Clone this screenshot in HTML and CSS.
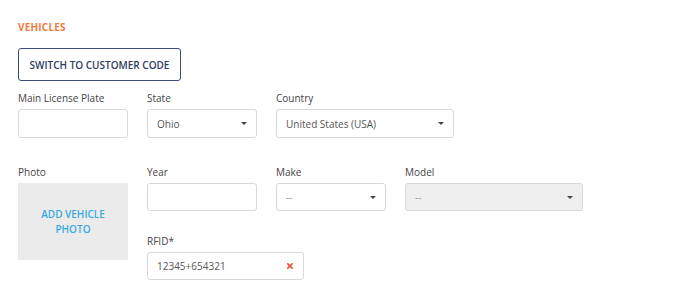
FILE: index.html
```html
<!DOCTYPE html>
<html>
<head>
<meta charset="utf-8">
<link rel="stylesheet" href="styles.css">
</head>
<body>
<div class="page">
  <h2 class="section-title">VEHICLES</h2>
  <button class="btn-outline">SWITCH TO CUSTOMER CODE</button>

  <div class="row row-1">
    <div class="field w-sm">
      <label class="label">Main License Plate</label>
      <div class="input"></div>
    </div>
    <div class="field w-sm">
      <label class="label">State</label>
      <div class="input select"><span class="value">Ohio</span><span class="caret"></span></div>
    </div>
    <div class="field w-lg">
      <label class="label">Country</label>
      <div class="input select"><span class="value">United States (USA)</span><span class="caret"></span></div>
    </div>
  </div>

  <div class="row row-2">
    <div class="field w-sm">
      <label class="label">Photo</label>
      <div class="photo"><span>ADD VEHICLE<br>PHOTO</span></div>
    </div>
    <div class="right">
      <div class="row">
        <div class="field w-sm">
          <label class="label">Year</label>
          <div class="input"></div>
        </div>
        <div class="field w-sm">
          <label class="label">Make</label>
          <div class="input select"><span class="value muted">--</span><span class="caret"></span></div>
        </div>
        <div class="field w-lg">
          <label class="label">Model</label>
          <div class="input select disabled"><span class="value muted">--</span><span class="caret"></span></div>
        </div>
      </div>
      <div class="field w-md rfid">
        <label class="label">RFID*</label>
        <div class="input select"><span class="value">12345+654321</span><svg class="clear" width="6" height="6" viewBox="0 0 6 6"><path d="M0.8 0.8 L5.2 5.2 M5.2 0.8 L0.8 5.2" stroke="#ee4b2b" stroke-width="1.6" stroke-linecap="square"/></svg></div>
      </div>
    </div>
  </div>
</div>
</body>
</html>
```

FILE: styles.css
```css
* { box-sizing: border-box; }
html, body { margin: 0; padding: 0; background: #fff; }
body { font-family: "Open Sans", "DejaVu Sans", sans-serif; color: #444; }
.page { padding: 20px 18px 0 18px; }
.section-title {
  margin: 0;
  font-size: 10px;
  line-height: 14px;
  font-weight: 700;
  color: #f5793b;
  letter-spacing: 0.2px;
}
.btn-outline {
  display: block;
  margin-top: 14px;
  width: 163px;
  height: 33px;
  border: 1px solid #3a4a7c;
  border-radius: 3px;
  background: #fff;
  color: #2f3b63;
  font-family: inherit;
  font-size: 10px;
  font-weight: 600;
  letter-spacing: 0;
  padding: 0;
}
.row { display: flex; gap: 19px; align-items: flex-start; }
.row-1 { margin-top: 10px; }
.row-2 { margin-top: 27px; }
.field { display: flex; flex-direction: column; }
.w-sm { width: 110px; }
.w-md { width: 157px; }
.w-lg { width: 178px; }
.label {
  font-size: 10px;
  line-height: 14px;
  color: #444;
  margin-bottom: 4px;
}
.input {
  height: 29px;
  border: 1px solid #d9d9d9;
  border-radius: 3px;
  background: #fff;
  display: flex;
  align-items: center;
  padding: 0 9px;
  font-size: 10px;
  color: #555;
}
.row-2 .input { height: 28px; }
.select { justify-content: space-between; }
.value.muted { color: #999; }
.disabled { background: #efefef; }
.caret {
  width: 0; height: 0;
  border-left: 3px solid transparent;
  border-right: 3px solid transparent;
  border-top: 3px solid #444;
  margin-right: 0;
}
.clear { display: block; margin-right: 1px; }
.photo {
  height: 77px;
  background: #ebebeb;
  display: flex;
  align-items: center;
  justify-content: center;
  text-align: center;
  font-size: 10px;
  line-height: 15px;
  font-weight: 600;
  color: #3aa9e0;
}
.right { display: flex; flex-direction: column; }
.rfid { margin-top: 23px; }
```
